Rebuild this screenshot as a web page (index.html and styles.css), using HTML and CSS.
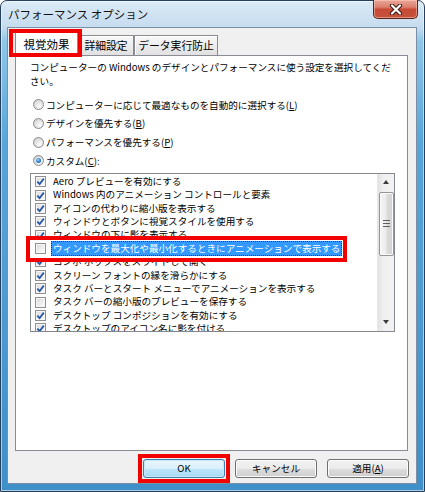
FILE: index.html
```html
<!DOCTYPE html>
<html lang="ja">
<head>
<meta charset="utf-8">
<title>パフォーマンス オプション</title>
<link rel="stylesheet" href="styles.css">
</head>
<body>
<div class="window">
  <div class="titlebar">
    <span class="title">パフォーマンス オプション</span>
    <button class="close" aria-label="閉じる">
      <svg width="14" height="11" viewBox="0 0 14 11">
        <path d="M3 1.5 L11 9.5 M11 1.5 L3 9.5" stroke="#3a1a14" stroke-width="4.2" stroke-linecap="round"/>
        <path d="M3 1.5 L11 9.5 M11 1.5 L3 9.5" stroke="#ffffff" stroke-width="2.2" stroke-linecap="round"/>
      </svg>
    </button>
  </div>
  <div class="client">
    <div class="tabs">
      <div class="tab active">視覚効果</div>
      <div class="tab t2">詳細設定</div>
      <div class="tab t3">データ実行防止</div>
      <span class="mark mark-tab"></span>
    </div>
    <div class="panel">
      <p class="desc">コンピューターの Windows のデザインとパフォーマンスに使う設定を選択してください。</p>
      <div class="radios">
        <div class="radio"><span class="rb"></span><span>コンピューターに応じて最適なものを自動的に選択する(<u>L</u>)</span></div>
        <div class="radio"><span class="rb"></span><span>デザインを優先する(<u>B</u>)</span></div>
        <div class="radio"><span class="rb"></span><span>パフォーマンスを優先する(<u>P</u>)</span></div>
        <div class="radio"><span class="rb on"></span><span>カスタム(<u>C</u>):</span></div>
      </div>
      <div class="list">
        <div class="items">
          <div class="item"><span class="cb on"><svg viewBox="0 0 9 9"><path d="M1.3 4.6 L3.6 7.2 L7.8 1.6" /></svg></span>Aero プレビューを有効にする</div>
          <div class="item"><span class="cb on"><svg viewBox="0 0 9 9"><path d="M1.3 4.6 L3.6 7.2 L7.8 1.6" /></svg></span>Windows 内のアニメーション コントロールと要素</div>
          <div class="item"><span class="cb on"><svg viewBox="0 0 9 9"><path d="M1.3 4.6 L3.6 7.2 L7.8 1.6" /></svg></span>アイコンの代わりに縮小版を表示する</div>
          <div class="item"><span class="cb on"><svg viewBox="0 0 9 9"><path d="M1.3 4.6 L3.6 7.2 L7.8 1.6" /></svg></span>ウィンドウとボタンに視覚スタイルを使用する</div>
          <div class="item"><span class="cb on"><svg viewBox="0 0 9 9"><path d="M1.3 4.6 L3.6 7.2 L7.8 1.6" /></svg></span>ウィンドウの下に影を表示する</div>
          <div class="item"><span class="cb"></span>ウィンドウを最大化や最小化するときにアニメーションで表示する</div>
          <div class="item"><span class="cb on"><svg viewBox="0 0 9 9"><path d="M1.3 4.6 L3.6 7.2 L7.8 1.6" /></svg></span>コンボ ボックスをスライドして開く</div>
          <div class="item"><span class="cb on"><svg viewBox="0 0 9 9"><path d="M1.3 4.6 L3.6 7.2 L7.8 1.6" /></svg></span>スクリーン フォントの縁を滑らかにする</div>
          <div class="item"><span class="cb on"><svg viewBox="0 0 9 9"><path d="M1.3 4.6 L3.6 7.2 L7.8 1.6" /></svg></span>タスク バーとスタート メニューでアニメーションを表示する</div>
          <div class="item"><span class="cb"></span>タスク バーの縮小版のプレビューを保存する</div>
          <div class="item"><span class="cb on"><svg viewBox="0 0 9 9"><path d="M1.3 4.6 L3.6 7.2 L7.8 1.6" /></svg></span>デスクトップ コンポジションを有効にする</div>
          <div class="item"><span class="cb on"><svg viewBox="0 0 9 9"><path d="M1.3 4.6 L3.6 7.2 L7.8 1.6" /></svg></span>デスクトップのアイコン名に影を付ける</div>
        </div>
        <div class="scrollbar">
          <div class="sb-btn"><span class="arrow up"></span></div>
          <div class="sb-track"><div class="sb-thumb"><span class="grip"></span></div></div>
          <div class="sb-btn"><span class="arrow down"></span></div>
        </div>
        <div class="hl-row"><span class="cb"></span><span class="hl-text">ウィンドウを最大化や最小化するときにアニメーションで表示する</span></div>
      </div>
    </div>
    <div class="buttons">
      <button class="btn default">OK</button>
      <button class="btn">キャンセル</button>
      <button class="btn">適用(<u>A</u>)</button>
    </div>
  </div>
</div>
</body>
</html>
```

FILE: styles.css
```css
* { box-sizing: border-box; }
html, body { margin: 0; padding: 0; }
body {
  width: 425px;
  height: 492px;
  overflow: hidden;
  background: #ffffff;
  font-family: "Noto Sans CJK JP", sans-serif;
  font-size: 9.6px;
  color: #000;
}
u { text-decoration: underline; text-underline-offset: 1px; }

.window {
  width: 425px;
  height: 492px;
  display: flex;
  flex-direction: column;
  border: 1px solid #24405c;
  border-radius: 7px 7px 0 0;
  background: linear-gradient(to bottom, #dbeaf6 0, #c6dcef 26px, #8fc6e8 40px, #57a6da 140px, #3f90c9 100%);
  box-shadow: inset 0 0 0 1px rgba(255,255,255,0.55);
}

.titlebar {
  height: 26px;
  display: flex;
  justify-content: space-between;
  align-items: flex-start;
}
.title {
  padding: 5px 0 0 7px;
  font-size: 11.5px;
  line-height: 16px;
  color: #111;
}
.close {
  width: 45px;
  height: 19px;
  margin: -1px 6px 0 0;
  padding: 0;
  border: 1px solid #5b2318;
  border-top: none;
  border-radius: 0 0 5px 5px;
  background: linear-gradient(to bottom, #e9a898 0, #dc7e6c 40%, #c84a35 52%, #c4533c 100%);
  box-shadow: inset 0 0 0 1px rgba(255,210,200,0.5);
  display: flex;
  align-items: center;
  justify-content: center;
}

.client {
  flex: 1;
  margin: 0 7px 7px 6px;
  border: 1px solid #7b8fa4;
  background: #f0f0f0;
  padding: 3px 8px 5px 7px;
  display: flex;
  flex-direction: column;
}

.tabs {
  height: 24px;
  display: flex;
  align-items: flex-end;
  position: relative;
  z-index: 1;
}
.tab {
  height: 20px;
  border: 1px solid #898c95;
  border-bottom: none;
  background: linear-gradient(to bottom, #f9f9f9 0, #ececec 50%, #e1e1e1 100%);
  box-shadow: inset 1px 1px 0 #fff;
  font-size: 10.8px;
  line-height: 18px;
  text-align: center;
  white-space: nowrap;
}
.tab.active {
  width: 63px;
  height: 25px;
  margin-bottom: -1px;
  background: #fff;
  box-shadow: none;
  font-size: 11.5px;
  line-height: 24px;
}
.tab.t2 { width: 56px; }
.tab.t3 { width: 84px; }

.mark-tab {
  position: absolute;
  left: -6px;
  top: -2px;
  width: 73px;
  height: 28px;
  border: 4px solid #f20000;
}

.panel {
  height: 396px;
  border: 1px solid #898c95;
  background: #fff;
  padding: 4px 12px 0 14px;
  position: relative;
}
.desc {
  margin: 0;
  line-height: 14px;
}

.radios { margin-top: 7.5px; }
.radio {
  height: 18.67px;
  display: flex;
  align-items: center;
  gap: 2px;
  padding-left: 3px;
  white-space: nowrap;
}
.rb {
  width: 11px;
  height: 11px;
  flex: none;
  border-radius: 50%;
  border: 1px solid #8a8a8a;
  background: radial-gradient(circle at 65% 70%, #fbfbfb 0, #e6e6e6 45%, #c9c9c9 100%);
  position: relative;
}
.rb.on::after {
  content: "";
  position: absolute;
  left: 2px;
  top: 2px;
  width: 5px;
  height: 5px;
  border-radius: 50%;
  background: radial-gradient(circle at 40% 35%, #9fd0f5 0, #2b7fd0 55%, #12508f 100%);
}

.list {
  margin-top: 2.5px;
  height: 159px;
  border: 1px solid #828790;
  display: flex;
  position: relative;
  background: #fff;
}
.items {
  flex: 1;
  padding-top: 1.3px;
  overflow: hidden;
}
.item {
  height: 13.4px;
  line-height: 13.4px;
  display: flex;
  align-items: center;
  gap: 7px;
  padding-left: 4px;
  white-space: nowrap;
}
.cb {
  width: 11px;
  height: 11px;
  flex: none;
  border: 1px solid #8e8f8f;
  background: linear-gradient(135deg, #d6d6d6 0, #ececec 50%, #fbfbfb 100%);
  box-shadow: inset 0 0 0 1px #f7f7f7;
  display: flex;
  align-items: center;
  justify-content: center;
}
.cb svg {
  width: 9px;
  height: 9px;
}
.cb svg path {
  fill: none;
  stroke: #2557a7;
  stroke-width: 1.8;
  stroke-linejoin: miter;
}

.scrollbar {
  width: 17px;
  flex: none;
  display: flex;
  flex-direction: column;
  background: linear-gradient(to right, #e3e3e3 0, #efefef 30%, #f3f3f3 100%);
  border-left: 1px solid #e8e8e8;
}
.sb-btn {
  height: 17px;
  display: flex;
  align-items: center;
  justify-content: center;
}
.arrow {
  width: 0;
  height: 0;
  border-left: 3.5px solid transparent;
  border-right: 3.5px solid transparent;
}
.arrow.up { border-bottom: 4px solid #3d3d3d; }
.arrow.down { border-top: 4px solid #3d3d3d; }
.sb-track {
  flex: 1;
  padding: 1px 0 0 1px;
}
.sb-thumb {
  width: 15px;
  height: 64px;
  border: 1px solid #959595;
  border-radius: 2px;
  background: linear-gradient(to right, #f6f6f6 0, #ececec 45%, #dadada 55%, #d2d2d2 100%);
  box-shadow: inset 0 0 0 1px #fbfbfb;
  display: flex;
  align-items: center;
  justify-content: center;
}
.grip {
  width: 7px;
  height: 7px;
  background: repeating-linear-gradient(to bottom, #5f5f5f 0, #5f5f5f 1px, transparent 1px, transparent 3px);
}

.hl-row {
  position: absolute;
  left: -5px;
  top: 62px;
  width: 321px;
  height: 26px;
  border: 4px solid #f20000;
  background: #fff;
  display: flex;
  align-items: center;
  gap: 5px;
  padding-left: 5px;
  white-space: nowrap;
}
.hl-text {
  height: 15px;
  line-height: 13px;
  padding: 0 1px;
  background: #3399ff;
  color: #fff;
  border: 1px dotted #0b3d8a;
}

.buttons {
  display: flex;
  justify-content: flex-end;
  gap: 10px;
  margin-top: 8px;
  margin-right: -1px;
}
.btn {
  width: 82px;
  height: 19px;
  padding: 0;
  border: 1px solid #707070;
  border-radius: 3px;
  font-family: inherit;
  font-size: 9.6px;
  line-height: 17px;
  color: #000;
  background: linear-gradient(to bottom, #f2f2f2 0, #ebebeb 50%, #dddddd 51%, #cfcfcf 100%);
  box-shadow: inset 0 0 0 1px #fbfbfb;
  position: relative;
}
.btn.default {
  border-color: #3c7fb1;
  background: linear-gradient(to bottom, #eaf6fd 0, #d9f0fc 50%, #bee6fd 51%, #a7d9f5 100%);
  box-shadow: inset 0 0 0 1px #c4e7fa;
}
.btn.default::after {
  content: "";
  position: absolute;
  left: -6px;
  top: -6px;
  right: -6px;
  bottom: -6px;
  border: 4px solid #f20000;
}
```
